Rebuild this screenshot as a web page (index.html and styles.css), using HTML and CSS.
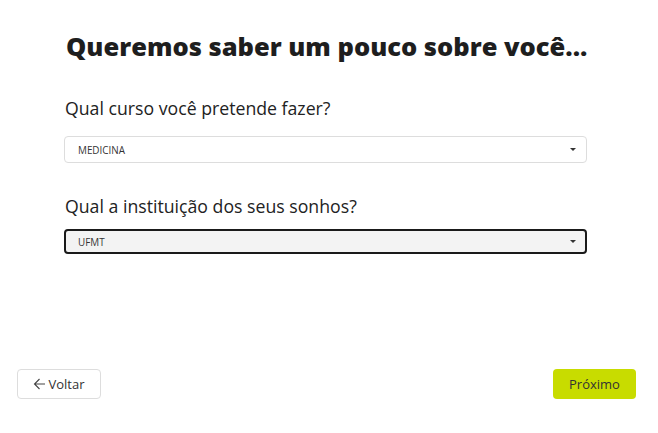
FILE: index.html
```html
<!DOCTYPE html>
<html lang="pt-BR">

<head>
    <meta charset="UTF-8">
    <meta name="viewport" content="width=device-width, initial-scale=1.0">
    <title>Queremos saber um pouco sobre você</title>
    <link rel="stylesheet" href="styles.css">
</head>

<body>
    <div class="page">
        <form class="survey">
            <h1>Queremos saber um pouco sobre você...</h1>

            <div class="field">
                <label for="curso">Qual curso você pretende fazer?</label>
                <div class="select">
                    <span>MEDICINA</span>
                    <i class="caret"></i>
                </div>
            </div>

            <div class="field active">
                <label for="instituicao">Qual a instituição dos seus sonhos?</label>
                <div class="select focused">
                    <span>UFMT</span>
                    <i class="caret"></i>
                </div>
            </div>
        </form>

        <div class="actions">
            <button type="button" class="btn back">
                <svg width="13" height="12" viewBox="0 0 13 12">
                    <path d="M12 6H1.5M6.5 1 1.5 6l5 5" fill="none" stroke="#444" stroke-width="1.1" />
                </svg>
                Voltar
            </button>
            <button type="button" class="btn next">Próximo</button>
        </div>
    </div>
</body>

</html>
```

FILE: styles.css
```css
body {
    margin: 0;
    font-family: "Open Sans", sans-serif;
    color: #222;
    background: #fff;
}

.page {
    height: 433px;
    display: flex;
    flex-direction: column;
    justify-content: space-between;
}

.survey {
    width: 523px;
    margin-left: 64px;
    padding-top: 27px;
}

h1 {
    margin: 0 0 30px 2px;
    font-size: 25.5px;
    line-height: 38px;
    font-weight: 800;
    color: #1e1e1e;
    white-space: nowrap;
}

.field {
    margin-bottom: 30px;
}

.field label {
    display: block;
    margin: 0 0 15px 1px;
    font-size: 17.7px;
    line-height: 26px;
    font-weight: 400;
    color: #222;
}

.field.active label {
    margin-bottom: 10px;
}

.select {
    height: 27px;
    box-sizing: border-box;
    border: 1px solid #ddd;
    border-radius: 4px;
    display: flex;
    align-items: center;
    justify-content: space-between;
    padding: 0 10px 0 13px;
    font-size: 9.9px;
    color: #333;
}

.select.focused {
    border: 2px solid #1a1a1a;
    background: #f3f3f3;
    height: 25px;
    padding-left: 12px;
    padding-right: 9px;
}

.caret {
    width: 0;
    height: 0;
    border-left: 3px solid transparent;
    border-right: 3px solid transparent;
    border-top: 3px solid #333;
}

.actions {
    display: flex;
    justify-content: space-between;
    padding: 0 22px 34px 17px;
}

.btn {
    height: 30px;
    width: 84px;
    border-radius: 4px;
    font-family: "Open Sans", sans-serif;
    font-size: 13px;
    font-weight: 500;
    color: #333;
    display: flex;
    align-items: center;
    justify-content: center;
    gap: 2px;
    cursor: pointer;
}

.back {
    background: #fff;
    border: 1px solid #ddd;
}

.next {
    background: #c8dc00;
    border: none;
    width: 83px;
}
```
